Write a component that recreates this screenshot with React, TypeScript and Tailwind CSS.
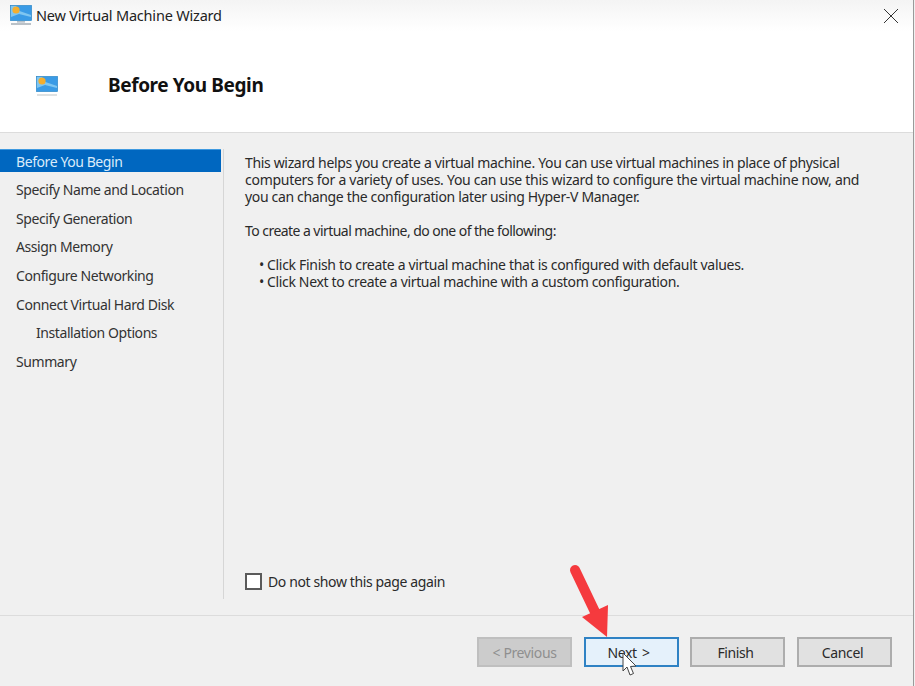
const font = { fontFamily: '"Noto Sans", "Open Sans", sans-serif' };

function Monitor({ className, faint }: { className: string; faint?: boolean }) {
  return (
    <svg viewBox="0 0 22 20" className={className}>
      <rect x="0.5" y="0.5" width="21" height="15" fill="#3a9be6" stroke="#2a86c8" strokeWidth="0.7" />
      <path d="M1 1h5l3.5 5L21 10v2L9 9 1 12z" fill="#7fc6f1" />
      <circle cx="6" cy="5" r="3.6" fill="#f4ae2e" />
      {!faint && <rect x="7" y="16.4" width="8" height="1" fill="#8a9aa8" />}
      <rect x="1" y="18.4" width="20" height="1.2" fill={faint ? "#c9cdd0" : "#8f9ba5"} />
    </svg>
  );
}

const steps = [
  { label: "Specify Name and Location" },
  { label: "Specify Generation" },
  { label: "Assign Memory" },
  { label: "Configure Networking" },
  { label: "Connect Virtual Hard Disk" },
  { label: "Installation Options", indent: true },
  { label: "Summary" },
];

function Btn({ children, variant }: { children: string; variant?: "disabled" | "active" }) {
  const cls =
    variant === "disabled"
      ? "bg-[#cccccc] border-[#bfbfbf] text-[#8f8f8f] mr-[-1px]"
      : variant === "active"
        ? "bg-[#e5f1fb] border-[#2f82c4] text-[#2a2a2a] pr-[6px] [word-spacing:2px] mr-[-1px] ml-[1px]"
        : "bg-[#e1e1e1] border-[#adadad] text-[#2a2a2a] pr-[4px]";
  return (
    <div className={`w-[95px] h-[30px] border-2 flex items-center justify-center text-[14px] tracking-[-0.38px] ${cls}`}>
      {children}
    </div>
  );
}

export default function App() {
  return (
    <div style={font} className="relative w-[915px] h-[686px] overflow-hidden bg-[#f0f0f0] text-[#222]">
      <div className="w-[914px] h-full flex flex-col border-r border-[#9a9a9a]">
        <div className="h-[133px] shrink-0 bg-white border-b border-[#dcdcdc] flex flex-col">
          <div className="h-[31px] shrink-0 flex items-center pl-[10px] pr-[14px] bg-gradient-to-b from-[#f4f4f4] to-white">
            <Monitor className="w-[22px] h-[20px] mr-[4px] -mt-[2px]" />
            <span className="text-[14.5px] tracking-[-0.2px] text-[#222]">New Virtual Machine Wizard</span>
            <svg viewBox="0 0 16 16" className="ml-auto w-[16px] h-[16px]" fill="none" stroke="#333" strokeWidth="1">
              <path d="M1 1l14 14M15 1L1 15" />
            </svg>
          </div>
          <div className="flex items-center flex-1 pt-[8px]">
            <Monitor faint className="ml-[36px] w-[22px] h-[20px]" />
            <h1 className="ml-[50px] text-[19px] font-bold tracking-[-0.4px] text-[#111]">Before You Begin</h1>
          </div>
        </div>

        <div className="flex flex-1 min-h-0">
          <div className="w-[224px] shrink-0 pt-[16px] pb-[16px]">
            <div className="h-full border-r border-[#d6d6d6]">
              <div className="w-[221px] h-[23px] bg-[#0067c0] border-t border-[#3f9ae0] text-[#d9ebfa] text-[14px] tracking-[-0.42px] flex items-center pl-[16px]">
                Before You Begin
              </div>
              <div className="pt-[3px]">
                {steps.map((s) => (
                  <div
                    key={s.label}
                    className={`h-[28.7px] flex items-center text-[14px] tracking-[-0.42px] text-[#333] ${s.indent ? "pl-[36px]" : "pl-[16px]"}`}
                  >
                    {s.label}
                  </div>
                ))}
              </div>
            </div>
          </div>
          <div className="flex-1 flex flex-col pl-[21px] pt-[21px] pb-[25px] text-[14px] leading-[17px] text-[#2a2a2a]">
            <p className="tracking-[-0.34px]">
              <span className="block">This wizard helps you create a virtual machine. You can use virtual machines in place of physical</span>
              <span className="block tracking-[-0.28px]">computers for a variety of uses. You can use this wizard to configure the virtual machine now, and</span>
              <span className="block">you can change the configuration later using Hyper-V Manager.</span>
            </p>
            <p className="mt-[17px] tracking-[-0.55px]">To create a virtual machine, do one of the following:</p>
            <ul className="mt-[17px] pl-[14px]">
              <li className="flex tracking-[-0.31px]">
                <span className="w-[8px] shrink-0" aria-hidden="true">•</span>
                <span>Click Finish to create a virtual machine that is configured with default values.</span>
              </li>
              <li className="flex tracking-[-0.34px]">
                <span className="w-[8px] shrink-0" aria-hidden="true">•</span>
                <span>Click Next to create a virtual machine with a custom configuration.</span>
              </li>
            </ul>
            <div className="mt-auto flex items-center h-[18px] tracking-[-0.38px]">
              <div className="w-[17px] h-[17px] bg-white border-2 border-[#5a5a5a] mr-[6px]" />
              <span>Do not show this page again</span>
            </div>
          </div>
        </div>

        <div className="h-[71px] shrink-0 border-t border-[#dcdcdc] flex justify-end items-start pt-[21px] pr-[21px] gap-[12px]">
          <Btn variant="disabled">&lt; Previous</Btn>
          <Btn variant="active">Next &gt;</Btn>
          <Btn>Finish</Btn>
          <Btn>Cancel</Btn>
        </div>
      </div>

      <svg viewBox="0 0 50 80" className="absolute left-[565px] top-[562px] w-[50px] h-[80px]">
        <path d="M10 8L31 52" stroke="#f53a3e" strokeWidth="10" strokeLinecap="round" fill="none" />
        <path d="M17 55L43 43L42 75Z" fill="#f53a3e" />
      </svg>
      <svg viewBox="0 0 18 26" className="absolute left-[621px] top-[652px] w-[18px] h-[26px]">
        <path d="M2 1L2 19L6 15L9 23L12.5 21.5L9.5 14.5L15 14Z" fill="#fff" stroke="#444" strokeWidth="1" strokeLinejoin="round" />
      </svg>
    </div>
  );
}
